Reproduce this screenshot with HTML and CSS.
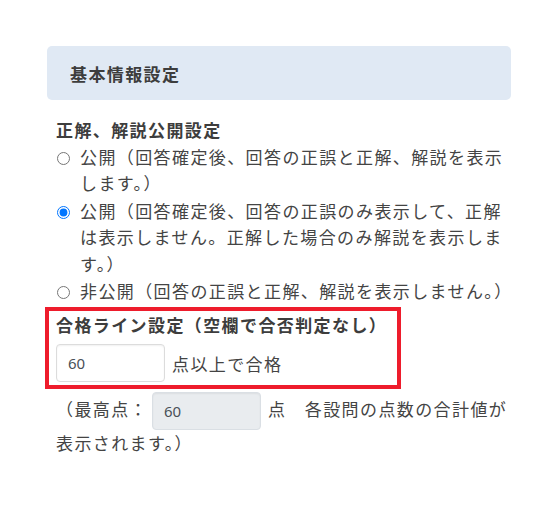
FILE: index.html
```html
<!DOCTYPE html>
<html lang="ja">
<head>
<meta charset="utf-8">
<link rel="stylesheet" href="styles.css">
</head>
<body>
<div class="page">
  <div class="card-header">基本情報設定</div>
  <div class="body">
    <div class="label">正解、解説公開設定</div>
    <label class="radio"><input type="radio" name="pub"><span>公開（回答確定後、回答の正誤と正解、解説を表示します。）</span></label>
    <label class="radio"><input type="radio" name="pub" checked><span>公開（回答確定後、回答の正誤のみ表示して、正解は表示しません。正解した場合のみ解説を表示します。）</span></label>
    <label class="radio"><input type="radio" name="pub"><span>非公開（回答の正誤と正解、解説を表示しません。）</span></label>
    <div class="highlight">
      <div class="label">合格ライン設定（空欄で合否判定なし）</div>
      <div class="row"><input class="field" type="text" value="60"><span>点以上で合格</span></div>
    </div>
    <div class="note">（最高点：<input class="field disabled" type="text" value="60" disabled>点　各設問の点数の合計値が表示されます。）</div>
  </div>
</div>
</body>
</html>
```
FILE: styles.css
```css
html, body { margin: 0; padding: 0; background: #fff; }
body {
  font-family: "Noto Sans CJK JP", "Noto Sans", sans-serif;
  color: #444;
  font-size: 17px;
  letter-spacing: 1.4px;
}
.page { width: 464px; padding: 46px 0 0 47px; }
.card-header {
  height: 54px;
  box-sizing: border-box;
  background: #e0e9f4;
  border-radius: 5px;
  padding: 0 0 0 23px;
  display: flex;
  align-items: center;
  font-weight: bold;
  color: #3d3d3d;
}
.body { padding: 17px 0 0 9px; }
.label { font-weight: bold; line-height: 26px; color: #3d3d3d; }
.radio { display: flex; align-items: flex-start; line-height: 26.4px; margin-top: 1px; }
.radio input { margin: 8px 10px 0 1px; width: 13px; height: 13px; flex: none; }
.highlight {
  margin: 3px 0 0 -11px;
  width: 356px;
  box-sizing: border-box;
  border: 4px solid #ee1c2c;
  padding: 1px 0 3px 7px;
}
.row { display: flex; align-items: center; gap: 7px; margin-top: 6px; }
.field {
  width: 109px;
  height: 38px;
  box-sizing: border-box;
  border: 1px solid #dcdcdc;
  border-radius: 4px;
  padding: 0 11px;
  font-family: "Noto Sans", sans-serif;
  font-size: 15px;
  color: #495057;
  background: #fff;
  letter-spacing: 0;
  box-shadow: inset 0 1px 2px rgba(0,0,0,0.06);
}
.field.disabled { background: #e9ecef; border-color: #dadfe4; margin: 0 7px 0 4px; vertical-align: middle; }
.note { line-height: 26.4px; margin-top: 3px; }
```
